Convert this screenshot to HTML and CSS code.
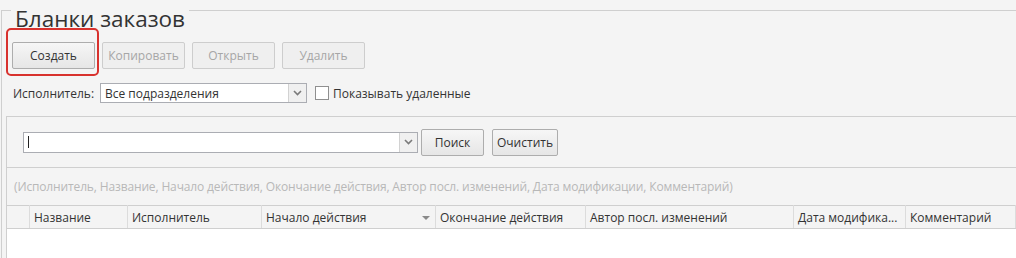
FILE: index.html
```html
<!DOCTYPE html>
<html lang="ru">
<head>
    <meta charset="UTF-8">
    <title>Бланки заказов</title>
    <link rel="stylesheet" href="styles.css">
</head>
<body>
    <div class="panel">
        <h1 class="panel-title">Бланки заказов</h1>

        <div class="toolbar">
            <button class="btn">Создать</button>
            <button class="btn" disabled>Копировать</button>
            <button class="btn" disabled>Открыть</button>
            <button class="btn" disabled>Удалить</button>
            <span class="highlight"></span>
        </div>

        <div class="filter-row">
            <span class="filter-label">Исполнитель:</span>
            <div class="combo combo-dept">
                <span class="combo-text">Все подразделения</span>
                <span class="combo-btn">
                    <svg width="9" height="6" viewBox="0 0 9 6"><path d="M1 1l3.5 3.5L8 1" fill="none" stroke="#7a7a7a" stroke-width="1.6"/></svg>
                </span>
            </div>
            <label class="check"><span class="check-box"></span>Показывать удаленные</label>
        </div>

        <div class="content">
            <div class="search-panel">
                <div class="combo combo-search">
                    <span class="caret"></span>
                    <span class="combo-btn">
                        <svg width="9" height="6" viewBox="0 0 9 6"><path d="M1 1l3.5 3.5L8 1" fill="none" stroke="#7a7a7a" stroke-width="1.6"/></svg>
                    </span>
                </div>
                <button class="btn btn-search">Поиск</button>
                <button class="btn btn-clear">Очистить</button>
            </div>

            <div class="hint">(Исполнитель, Название, Начало действия, Окончание действия, Автор посл. изменений, Дата модификации, Комментарий)</div>

            <table class="grid">
                <thead>
                    <tr>
                        <th class="col-sel"></th>
                        <th class="col-name">Название</th>
                        <th class="col-exec">Исполнитель</th>
                        <th class="col-start">Начало действия <span class="sort"></span></th>
                        <th class="col-end">Окончание действия</th>
                        <th class="col-author">Автор посл. изменений</th>
                        <th class="col-date">Дата модифика...</th>
                        <th class="col-comment">Комментарий</th>
                    </tr>
                </thead>
                <tbody>
                    <tr class="empty"><td colspan="8"></td></tr>
                </tbody>
            </table>
        </div>
    </div>
</body>
</html>
```

FILE: styles.css
```css
body {
    margin: 0;
    background-color: #f4f4f4;
    color: #333;
    font-family: "Open Sans", "Liberation Sans", sans-serif;
    font-size: 12px;
    overflow: hidden;
}

.panel {
    margin: 10px 0 0 1px;
    border-top: 1px solid #cfcfcf;
    border-left: 1px solid #cfcfcf;
}

.panel-title {
    width: fit-content;
    margin: -5px 0 0 9px;
    padding: 0 4px;
    background-color: #f4f4f4;
    font-size: 22.5px;
    font-weight: normal;
    line-height: 26px;
    color: #333;
}

.toolbar {
    position: relative;
    display: flex;
    gap: 7px;
    margin-top: 10px;
    padding-left: 10px;
}

.btn {
    width: 83px;
    height: 27px;
    padding: 0;
    border: 1px solid #adadad;
    border-radius: 2px;
    background: linear-gradient(#f6f6f6, #e6e6e6);
    color: #333;
    font-family: inherit;
    font-size: 12px;
}

.btn:disabled {
    border-color: #cdcdcd;
    background: #efefef;
    color: #a6a6a6;
}

.highlight {
    position: absolute;
    left: 4px;
    top: -14px;
    width: 89px;
    height: 44px;
    border: 2px solid #d8322e;
    border-radius: 5px;
}

.filter-row {
    display: flex;
    align-items: center;
    margin-top: 14px;
    padding-left: 11px;
    height: 20px;
}

.filter-label {
    width: 87px;
}

.combo {
    display: flex;
    align-items: center;
    border: 1px solid #abadb3;
    background-color: #fff;
    box-sizing: border-box;
}

.combo-dept {
    width: 207px;
    height: 20px;
}

.combo-text {
    flex: 1;
    padding-left: 4px;
}

.combo-btn {
    display: flex;
    align-items: center;
    justify-content: center;
    width: 17px;
    height: 100%;
    border-left: 1px solid #d2d2d2;
    background-color: #f0f0f0;
}

.check {
    display: flex;
    align-items: center;
    margin-left: 8px;
}

.check-box {
    width: 12px;
    height: 12px;
    margin-right: 4px;
    border: 1px solid #8f8f8f;
    background-color: #fff;
}

.content {
    margin: 13px 0 0 4px;
    border-left: 1px solid #cfcfcf;
}

.search-panel {
    display: flex;
    align-items: center;
    gap: 5px;
    height: 50px;
    padding-left: 16px;
    border-top: 1px solid #cfcfcf;
    border-bottom: 1px solid #cfcfcf;
}

.combo-search {
    width: 395px;
    height: 21px;
    margin-right: -2px;
}

.caret {
    width: 1px;
    height: 12px;
    margin-left: 4px;
    background-color: #222;
}

.combo-search .combo-btn {
    margin-left: auto;
}

.btn-search {
    width: 63px;
    margin-right: 3px;
}

.btn-clear {
    width: 66px;
}

.hint {
    height: 37px;
    padding-left: 7px;
    line-height: 37px;
    color: #b8b8b8;
    letter-spacing: -0.14px;
}

.grid {
    width: 100%;
    border-collapse: collapse;
    table-layout: fixed;
}

.grid th {
    height: 22px;
    padding: 0 4px;
    border-top: 1px solid #cfcfcf;
    border-bottom: 1px solid #cfcfcf;
    border-right: 1px solid #dcdcdc;
    background-color: #f4f4f4;
    font-weight: normal;
    text-align: left;
    white-space: nowrap;
    overflow: hidden;
}

.col-sel { width: 14px; }
.col-name { width: 89px; }
.col-exec { width: 125px; }
.col-start { width: 165px; position: relative; }
.col-end { width: 141px; }
.col-author { width: 199px; }
.col-date { width: 103px; }

.sort {
    position: absolute;
    right: 5px;
    top: 10px;
    border-left: 4px solid transparent;
    border-right: 4px solid transparent;
    border-top: 4px solid #8a8a8a;
}

.empty td {
    height: 29px;
    background-color: #fff;
}
```
